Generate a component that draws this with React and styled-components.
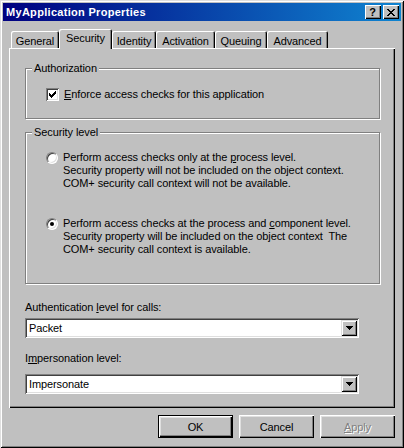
import React from "react";
import styled, { createGlobalStyle } from "styled-components";

const Global = createGlobalStyle`
  html, body { margin: 0; padding: 0; background: #c0c0c0; }
  body { font-family: "Liberation Sans", Arial, sans-serif; font-size: 11px; letter-spacing: -0.1px; color: #000; }
  * { box-sizing: border-box; }
`;

const Window = styled.div`
  width: 404px;
  height: 448px;
  padding: 3px;
  background: #c0c0c0;
  box-shadow: inset 1px 1px #dfdfdf, inset -1px -1px #000, inset 2px 2px #fff, inset -2px -2px #808080;
  display: flex;
  flex-direction: column;
`;

const TitleBar = styled.div`
  height: 18px;
  display: flex;
  align-items: center;
  padding: 0 2px 0 3px;
  background: linear-gradient(90deg, #000080, #1084d0);
`;

const Title = styled.div`
  flex: 1;
  color: #fff;
  font-weight: bold;
  font-size: 11px;
  letter-spacing: 0.3px;
  white-space: nowrap;
`;

const CaptionButtons = styled.div`
  display: flex;
  gap: 2px;
`;

const CaptionButton = styled.div`
  width: 16px;
  height: 14px;
  background: #c0c0c0;
  box-shadow: inset 1px 1px #fff, inset -1px -1px #000, inset -2px -2px #808080;
  display: flex;
  align-items: center;
  justify-content: center;
  font-weight: bold;
  font-size: 11px;
  line-height: 14px;
  padding-right: 1px;
`;

const Body = styled.div`
  flex: 1;
  padding: 8px 3px 0 6px;
  display: flex;
  flex-direction: column;
`;

const TabStrip = styled.div`
  position: relative;
  z-index: 1;
  height: 19px;
  display: flex;
  align-items: flex-end;
  padding-left: 2px;
`;

const Tab = styled.div`
  width: ${(p) => p.$w}px;
  height: ${(p) => (p.$active ? 20 : 17)}px;
  margin-bottom: ${(p) => (p.$active ? -1 : 0)}px;
  padding-top: ${(p) => (p.$active ? 2 : 3)}px;
  text-align: center;
  line-height: 14px;
  white-space: nowrap;
  background: #c0c0c0;
  border-top-left-radius: 2px;
  border-top-right-radius: 2px;
  box-shadow: inset 1px 1px #fff, inset -1px 0 #000, inset -2px 0 #808080;
`;

const Panel = styled.div`
  width: 386px;
  height: 360px;
  padding: 13px 14px 0 16px;
  background: #c0c0c0;
  box-shadow: inset 1px 1px #fff, inset -1px -1px #000, inset -2px -2px #808080;
  display: flex;
  flex-direction: column;
`;

const Group = styled.fieldset`
  margin: ${(p) => p.$mt || 0}px 0 0 0;
  padding: 0;
  min-width: 0;
  border: 1px solid #808080;
  box-shadow: inset 1px 1px #fff, 1px 1px #fff;
  width: 355px;
`;

const Legend = styled.legend`
  margin-left: 6px;
  padding: 0 2px;
  line-height: 14px;
  background: #c0c0c0;
`;

const GroupContent = styled.div`
  padding: ${(p) => p.$pt}px 0 ${(p) => p.$pb}px 20px;
  display: flex;
  flex-direction: column;
  gap: ${(p) => p.$gap || 0}px;
`;

const CheckRow = styled.div`
  display: flex;
  align-items: center;
  gap: 5px;
  line-height: 13px;
`;

const CheckBox = styled.div`
  width: 13px;
  height: 13px;
  background: #fff;
  box-shadow: inset 1px 1px #808080, inset -1px -1px #fff, inset 2px 2px #404040, inset -2px -2px #dfdfdf;
  display: flex;
  align-items: center;
  justify-content: center;
`;

const RadioRow = styled.div`
  display: flex;
  align-items: flex-start;
  gap: 5px;
`;

const Radio = styled.div`
  flex: none;
  width: 12px;
  height: 12px;
  margin-top: 1px;
  border-radius: 50%;
  border: 1px solid;
  border-color: #808080 #fff #fff #808080;
  background: #fff;
  box-shadow: inset 1px 1px #404040, inset -1px -1px #dfdfdf;
  display: flex;
  align-items: center;
  justify-content: center;
  &::after {
    content: "";
    width: 4px;
    height: 4px;
    border-radius: 50%;
    background: ${(p) => (p.$checked ? "#000" : "transparent")};
  }
`;

const RadioText = styled.div`
  line-height: 13px;
  white-space: nowrap;
`;

const FieldLabel = styled.div`
  margin-top: ${(p) => p.$mt}px;
  line-height: 14px;
`;

const Combo = styled.div`
  margin-top: ${(p) => p.$mt}px;
  width: 334px;
  height: 20px;
  padding: 2px;
  background: #fff;
  box-shadow: inset 1px 1px #808080, inset -1px -1px #fff, inset 2px 2px #404040, inset -2px -2px #dfdfdf;
  display: flex;
  align-items: center;
`;

const ComboText = styled.div`
  flex: 1;
  padding-left: 2px;
  line-height: 16px;
`;

const ComboButton = styled.div`
  width: 16px;
  height: 16px;
  background: #c0c0c0;
  box-shadow: inset 1px 1px #dfdfdf, inset -1px -1px #000, inset 2px 2px #fff, inset -2px -2px #808080;
  display: flex;
  align-items: center;
  justify-content: center;
`;

const Footer = styled.div`
  display: flex;
  justify-content: flex-end;
  gap: 6px;
  padding-top: 7px;
  width: 386px;
`;

const Button = styled.div`
  width: 75px;
  height: 23px;
  display: flex;
  align-items: center;
  justify-content: center;
  background: #c0c0c0;
  border: ${(p) => (p.$default ? "1px solid #000" : "none")};
  box-shadow: inset 1px 1px #fff, inset -1px -1px #000, inset -2px -2px #808080, inset 2px 2px #dfdfdf;
  color: ${(p) => (p.$disabled ? "#808080" : "#000")};
  text-shadow: ${(p) => (p.$disabled ? "1px 1px 0 #fff" : "none")};
`;

const CloseGlyph = () => (
  <svg width="8" height="7" viewBox="0 0 8 7" shapeRendering="crispEdges">
    <path d="M0 0h2v1H0z M6 0h2v1H6z M1 1h2v1H1z M5 1h2v1H5z M2 2h4v1H2z M3 3h2v1H3z M2 4h4v1H2z M1 5h2v1H1z M5 5h2v1H5z M0 6h2v1H0z M6 6h2v1H6z" fill="#000" />
  </svg>
);

const CheckGlyph = () => (
  <svg width="7" height="7" viewBox="0 0 7 7" shapeRendering="crispEdges">
    <path d="M6 0h1v1H6z M5 1h2v1H5z M0 2h1v1H0z M4 2h3v1H4z M0 3h2v1H0z M3 3h3v1H3z M0 4h5v1H0z M1 5h3v1H1z M2 6h1v1H2z" fill="#000" />
  </svg>
);

const Arrow = () => (
  <svg width="7" height="4" viewBox="0 0 7 4" shapeRendering="crispEdges">
    <path d="M0 0h7v1H0z M1 1h5v1H1z M2 2h3v1H2z M3 3h1v1H3z" fill="#000" />
  </svg>
);

const tabs = [
  { label: "General", w: 48 },
  { label: "Security", w: 53, active: true },
  { label: "Identity", w: 44 },
  { label: "Activation", w: 59 },
  { label: "Queuing", w: 52 },
  { label: "Advanced", w: 61 },
];

export default function App() {
  return (
    <>
      <Global />
      <Window>
        <TitleBar>
          <Title>MyApplication Properties</Title>
          <CaptionButtons>
            <CaptionButton>?</CaptionButton>
            <CaptionButton>
              <CloseGlyph />
            </CaptionButton>
          </CaptionButtons>
        </TitleBar>
        <Body>
          <TabStrip>
            {tabs.map((t) => (
              <Tab key={t.label} $w={t.w} $active={t.active}>
                {t.label}
              </Tab>
            ))}
          </TabStrip>
          <Panel>
            <Group>
              <Legend>Authorization</Legend>
              <GroupContent $pt={13} $pb={17}>
                <CheckRow>
                  <CheckBox>
                    <CheckGlyph />
                  </CheckBox>
                  <span>
                    <u>E</u>nforce access checks for this application
                  </span>
                </CheckRow>
              </GroupContent>
            </Group>
            <Group $mt={6}>
              <Legend>Security level</Legend>
              <GroupContent $pt={12} $pb={27} $gap={27}>
                <RadioRow>
                  <Radio />
                  <RadioText>
                    Perform access checks only at the <u>p</u>rocess level.
                    <br />
                    Security property will not be included on the object context.
                    <br />
                    COM+ security call context will not be available.
                  </RadioText>
                </RadioRow>
                <RadioRow>
                  <Radio $checked />
                  <RadioText>
                    Perform access checks at the process and <u>c</u>omponent level.
                    <br />
                    Security property will be included on the object context&nbsp; The
                    <br />
                    COM+ security call context is available.
                  </RadioText>
                </RadioRow>
              </GroupContent>
            </Group>
            <FieldLabel $mt={16}>
              Authentication <u>l</u>evel for calls:
            </FieldLabel>
            <Combo $mt={4}>
              <ComboText>Packet</ComboText>
              <ComboButton>
                <Arrow />
              </ComboButton>
            </Combo>
            <FieldLabel $mt={13}>
              I<u>m</u>personation level:
            </FieldLabel>
            <Combo $mt={9}>
              <ComboText>Impersonate</ComboText>
              <ComboButton>
                <Arrow />
              </ComboButton>
            </Combo>
          </Panel>
          <Footer>
            <Button $default>OK</Button>
            <Button>Cancel</Button>
            <Button $disabled>
              <span>
                <u>A</u>pply
              </span>
            </Button>
          </Footer>
        </Body>
      </Window>
    </>
  );
}
